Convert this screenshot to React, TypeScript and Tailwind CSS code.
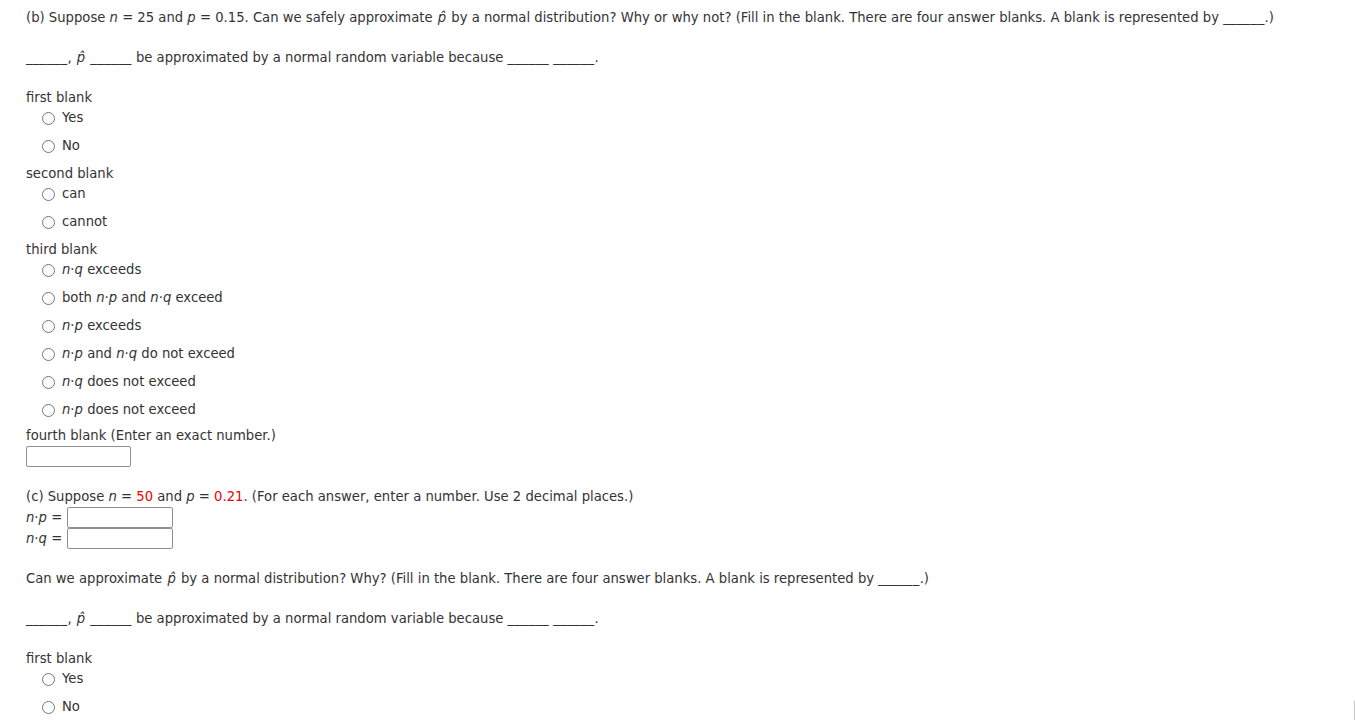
import React from "react";

const Blank = () => <span className="tracking-[0.3px]">______</span>;

const PHat = () => <i className="italic px-[1px]">p&#770;</i>;

const Radio = ({ children }: { children: React.ReactNode }) => (
  <label className="flex items-center h-[28px] pl-[16px]">
    <span className="inline-block w-[13px] h-[13px] rounded-full border border-[#757575] bg-white mr-[7px]" />
    <span>{children}</span>
  </label>
);

const Group = ({ title, options }: { title: React.ReactNode; options: React.ReactNode[] }) => (
  <div>
    <div className="h-[20px] leading-[20px]">{title}</div>
    <div className="-mt-[4px]">
      {options.map((o, i) => (
        <Radio key={i}>{o}</Radio>
      ))}
    </div>
  </div>
);

const NQ = () => (
  <>
    <i>n</i>·<i>q</i>
  </>
);
const NP = () => (
  <>
    <i>n</i>·<i>p</i>
  </>
);

const FillSentence = () => (
  <p className="h-[20px] leading-[20px]">
    <Blank />, <PHat /> <Blank /> be approximated by a normal random variable because <Blank /> <Blank />.
  </p>
);

export default function App() {
  return (
    <div
      className="min-h-screen bg-white text-[#333] text-[13.2px] px-[26px] pt-[8px] relative overflow-hidden"
      style={{ fontFamily: '"DejaVu Sans", Verdana, sans-serif' }}
    >
      <p className="h-[20px] leading-[20px]">
        (b) Suppose <i>n</i> = 25 and <i>p</i> = 0.15. Can we safely approximate <PHat /> by a normal distribution? Why or why not? (Fill in the blank. There are four answer blanks. A blank is represented by <Blank />.)
      </p>
      <div className="mt-[20px]">
        <FillSentence />
      </div>

      <div className="mt-[20px] flex flex-col gap-[4px]">
        <Group title="first blank" options={["Yes", "No"]} />
        <Group title="second blank" options={["can", "cannot"]} />
        <Group
          title="third blank"
          options={[
            <><NQ /> exceeds</>,
            <>both <NP /> and <NQ /> exceed</>,
            <><NP /> exceeds</>,
            <><NP /> and <NQ /> do not exceed</>,
            <><NQ /> does not exceed</>,
            <><NP /> does not exceed</>,
          ]}
        />
        <div className="-mt-[2px]">
          <div className="h-[20px] leading-[20px]">fourth blank (Enter an exact number.)</div>
          <input className="block w-[105px] h-[21px] border border-[#8f8f8f] rounded-[2px] outline-none" />
        </div>
      </div>

      <p className="mt-[20px] h-[20px] leading-[20px]">
        (c) Suppose <i>n</i> = <span className="text-[#e00]">50</span> and <i>p</i> = <span className="text-[#e00]">0.21</span>. (For each answer, enter a number. Use 2 decimal places.)
      </p>
      <div className="flex items-center h-[21px]">
        <span className="w-[41px]">
          <NP /> =
        </span>
        <input className="block w-[106px] h-[21px] border border-[#8f8f8f] rounded-[2px] outline-none" />
      </div>
      <div className="flex items-center h-[21px]">
        <span className="w-[41px]">
          <NQ /> =
        </span>
        <input className="block w-[106px] h-[21px] border border-[#8f8f8f] rounded-[2px] outline-none" />
      </div>

      <p className="mt-[20px] h-[20px] leading-[20px]">
        Can we approximate <PHat /> by a normal distribution? Why? (Fill in the blank. There are four answer blanks. A blank is represented by <Blank />.)
      </p>
      <div className="mt-[20px]">
        <FillSentence />
      </div>
      <div className="mt-[20px]">
        <Group title="first blank" options={["Yes", "No"]} />
      </div>

      <div className="absolute right-0 bottom-0 w-[1px] h-[20px] bg-[#c8c8c8]" />
    </div>
  );
}
